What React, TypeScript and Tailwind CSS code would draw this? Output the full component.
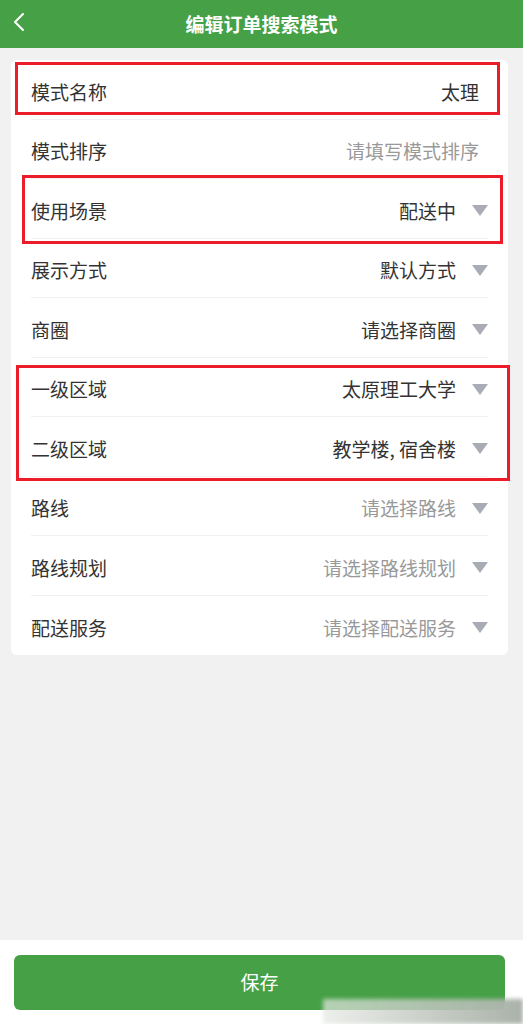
import React from "react";

type Row = {
  label: string;
  value: string;
  placeholder?: boolean;
  arrow?: boolean;
};

const rows: Row[] = [
  { label: "模式名称", value: "太理" },
  { label: "模式排序", value: "请填写模式排序", placeholder: true },
  { label: "使用场景", value: "配送中", arrow: true },
  { label: "展示方式", value: "默认方式", arrow: true },
  { label: "商圈", value: "请选择商圈", arrow: true },
  { label: "一级区域", value: "太原理工大学", arrow: true },
  { label: "二级区域", value: "教学楼, 宿舍楼", arrow: true },
  { label: "路线", value: "请选择路线", placeholder: true, arrow: true },
  { label: "路线规划", value: "请选择路线规划", placeholder: true, arrow: true },
  { label: "配送服务", value: "请选择配送服务", placeholder: true, arrow: true },
];

function Caret() {
  return (
    <svg width="16" height="11" viewBox="0 0 16 11" className="ml-4 shrink-0">
      <polygon points="0,0 16,0 8,11" fill="#a9acb5" />
    </svg>
  );
}

export default function App() {
  return (
    <div
      className="relative flex h-[1024px] w-[523px] flex-col overflow-hidden bg-[#f1f1f1]"
      style={{ fontFamily: '"Noto Sans CJK SC", "Noto Sans", sans-serif' }}
    >
      {/* Header */}
      <header className="relative flex h-12 shrink-0 items-center justify-center bg-[#46a046]">
        <svg
          width="14"
          height="20"
          viewBox="0 0 14 20"
          className="absolute left-[12px] top-[12px]"
        >
          <polyline
            points="11,2 3,10 11,18"
            fill="none"
            stroke="#fff"
            strokeWidth="2"
            strokeLinecap="round"
            strokeLinejoin="round"
          />
        </svg>
        <h1 className="text-[19px] font-bold text-white">编辑订单搜索模式</h1>
      </header>

      {/* Form card */}
      <div className="ml-[11px] mt-3 w-[497px] rounded-md bg-white">
        {rows.map((r, i) => (
          <div
            key={r.label}
            className={`mx-5 flex h-[59.5px] items-center pt-[5px] text-[19px] ${
              i < rows.length - 1 ? "border-b border-[#eff1f3]" : ""
            }`}
          >
            <span className="text-[#333]">{r.label}</span>
            <span
              className={`ml-auto ${
                r.placeholder ? "text-[#999]" : "text-[#333]"
              } ${!r.arrow ? "mr-[9px]" : ""}`}
            >
              {r.value}
            </span>
            {r.arrow && <Caret />}
          </div>
        ))}
      </div>

      <div className="flex-1" />

      {/* Footer */}
      <div className="h-[84px] shrink-0 bg-white pt-[15px]">
        <button className="ml-[14px] flex h-[55px] w-[491px] items-center justify-center rounded-md bg-[#46a046] text-[19px] text-white">
          保存
        </button>
      </div>

      {/* Annotation boxes */}
      <div className="pointer-events-none absolute left-[15px] top-[62px] h-[53px] w-[485px] border-[3px] border-[#ec1c2a]" />
      <div className="pointer-events-none absolute left-[22px] top-[175px] h-[69px] w-[481px] border-[3px] border-[#ec1c2a]" />
      <div className="pointer-events-none absolute left-[16px] top-[365px] h-[116px] w-[494px] border-[3px] border-[#ec1c2a]" />

      {/* Watermark smudge */}
      <div className="pointer-events-none absolute bottom-0 right-0 h-[25px] w-[200px] bg-gradient-to-r from-[#e6e8e4]/70 to-[#a9b2a8] blur-[2px]" />
    </div>
  );
}
